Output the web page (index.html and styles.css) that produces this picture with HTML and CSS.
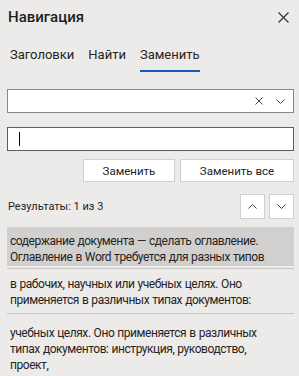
FILE: index.html
```html
<!DOCTYPE html>
<html lang="ru">
<head>
<meta charset="utf-8">
<link rel="stylesheet" href="styles.css">
</head>
<body>
<div class="pane">
  <div class="header">
    <div class="title">Навигация</div>
    <svg class="close" width="11" height="11" viewBox="0 0 11 11"><path d="M0.5 0.5L10.5 10.5M10.5 0.5L0.5 10.5" stroke="#333" stroke-width="1.2" fill="none"/></svg>
  </div>
  <div class="tabs">
    <div class="tab">Заголовки</div>
    <div class="tab">Найти</div>
    <div class="tab active">Заменить</div>
  </div>
  <div class="field search">
    <div class="field-space"></div>
    <svg class="clear" width="8" height="8" viewBox="0 0 8 8"><path d="M0.5 0.5L7.5 7.5M7.5 0.5L0.5 7.5" stroke="#444" stroke-width="1" fill="none"/></svg>
    <svg class="drop" width="9" height="5" viewBox="0 0 9 5"><path d="M0.5 0.5L4.5 4.5L8.5 0.5" stroke="#444" stroke-width="1" fill="none"/></svg>
  </div>
  <div class="field replace">
    <div class="caret"></div>
  </div>
  <div class="buttons">
    <div class="btn b1">Заменить</div>
    <div class="btn b2">Заменить все</div>
  </div>
  <div class="results-row">
    <div class="results">Результаты: 1 из 3</div>
    <div class="nav">
      <div class="navbtn"><svg width="9" height="5" viewBox="0 0 9 5"><path d="M0.5 4.5L4.5 0.5L8.5 4.5" stroke="#444" stroke-width="1" fill="none"/></svg></div>
      <div class="navbtn"><svg width="9" height="5" viewBox="0 0 9 5"><path d="M0.5 0.5L4.5 4.5L8.5 0.5" stroke="#444" stroke-width="1" fill="none"/></svg></div>
    </div>
  </div>
  <div class="list">
    <div class="item selected">содержание документа — сделать оглавление. Оглавление в Word требуется для разных типов</div>
    <div class="item">в рабочих, научных или учебных целях. Оно применяется в различных типах документов:</div>
    <div class="item">учебных целях. Оно применяется в различных типах документов: инструкция, руководство, проект,</div>
  </div>
</div>
</body>
</html>
```
FILE: styles.css
```css
html, body {
  margin: 0;
  padding: 0;
  background: #edebe9;
}
.pane {
  width: 299px;
  height: 376px;
  overflow: hidden;
  font-family: Roboto, "Noto Sans", sans-serif;
  color: #252423;
  box-sizing: border-box;
  padding: 0 5px 0 7px;
}
.header {
  display: flex;
  align-items: center;
  justify-content: space-between;
  height: 34px;
  padding-left: 1px;
  padding-right: 5px;
}
.title {
  font-size: 15px;
  font-weight: 500;
  color: #201f1e;
}
.close { display: block; }
.tabs {
  display: flex;
  gap: 14px;
  margin-top: 11px;
  padding-left: 3px;
  height: 27px;
}
.tab {
  font-size: 13px;
  line-height: 20px;
  padding-bottom: 3px;
  border-bottom: 2px solid transparent;
  color: #252423;
}
.tab.active {
  border-bottom-color: #185abd;
}
.field {
  height: 24px;
  box-sizing: border-box;
  background: #fff;
  border: 1px solid #8a8886;
  display: flex;
  align-items: center;
}
.search {
  margin-top: 17px;
  padding-right: 8px;
}
.field-space { flex: 1; }
.clear { margin-right: 13px; }
.replace {
  margin-top: 14px;
  border-color: #605e5c;
  padding-left: 11px;
}
.caret {
  width: 1px;
  height: 14px;
  background: #000;
}
.buttons {
  display: flex;
  justify-content: flex-end;
  gap: 5px;
  margin-top: 8px;
}
.btn {
  height: 23px;
  box-sizing: border-box;
  background: #fff;
  border: 1px solid #d2d0ce;
  font-size: 11.5px;
  display: flex;
  align-items: center;
  justify-content: center;
}
.b1 { width: 92px; }
.b2 { width: 114px; }
.results-row {
  display: flex;
  align-items: center;
  justify-content: space-between;
  margin-top: 12px;
}
.results {
  font-size: 11px;
  padding-left: 1px;
}
.nav { display: flex; gap: 4px; }
.navbtn {
  width: 25px;
  height: 25px;
  box-sizing: border-box;
  background: #fff;
  border: 1px solid #d2d0ce;
  display: flex;
  align-items: center;
  justify-content: center;
}
.list {
  margin-top: 8px;
}
.item {
  font-size: 12px;
  letter-spacing: -0.45px;
  word-spacing: 0.5px;
  line-height: 16px;
  padding: 8px 10px 5px 3px;
  border-bottom: 1px solid #c8c6c4;
}
.item:last-child { border-bottom: none; padding-top: 11px; }
.selected {
  background: #d2d0ce;
  padding-top: 6px;
  padding-bottom: 1px;
  border-bottom: none;
  margin-bottom: 2px;
  box-shadow: 0 2px 0 #edebe9, 0 3px 0 #c8c6c4;
}
```
